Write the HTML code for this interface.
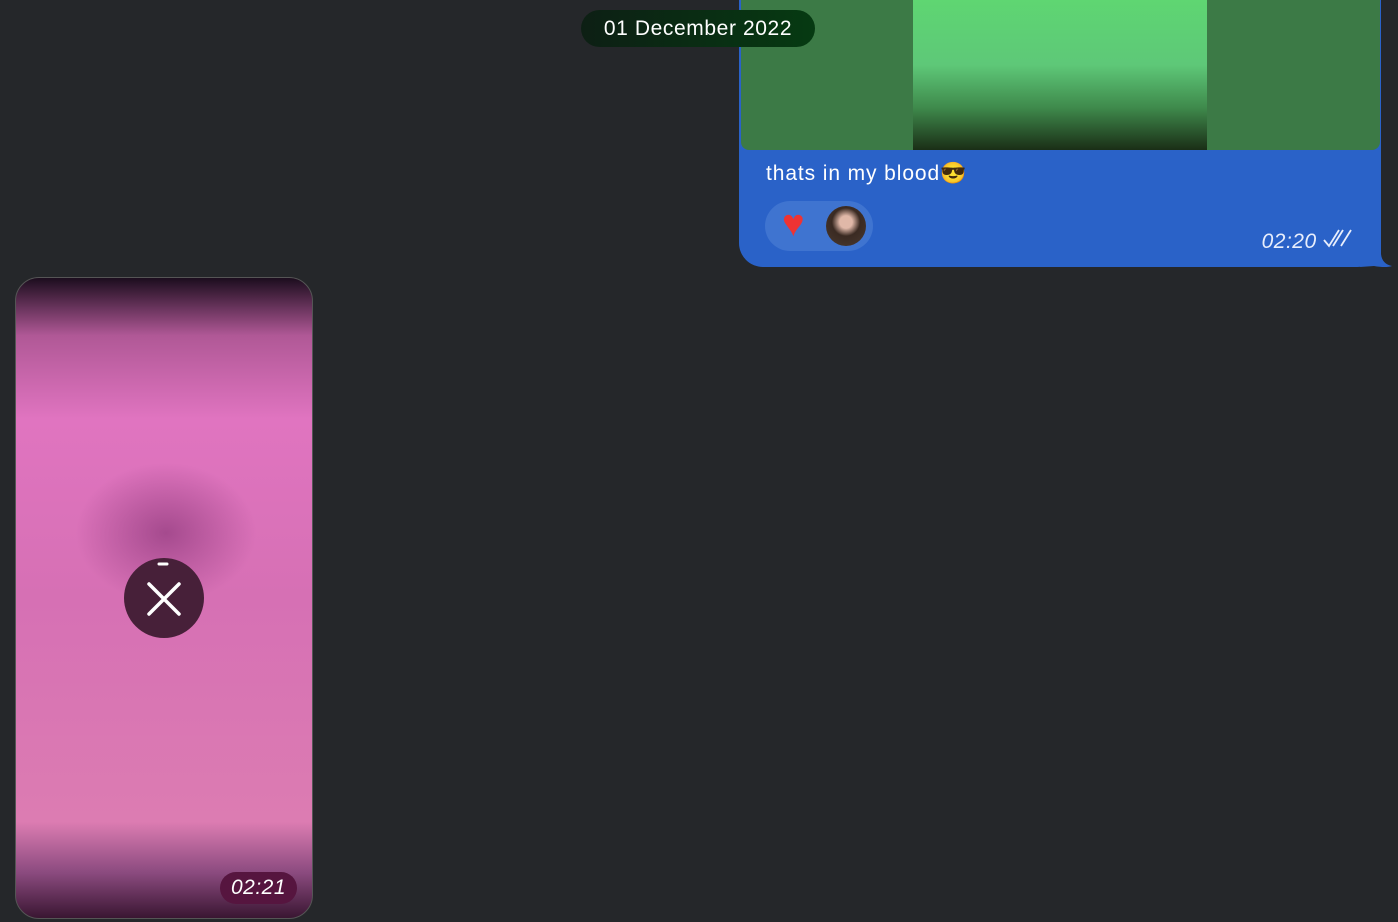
<!DOCTYPE html>
<html><head><style>
body{margin:0;width:1398px;height:922px;background:#25272a;overflow:hidden;position:relative;font-family:"Liberation Sans",sans-serif}
.date{position:absolute;left:581px;top:10px;width:234px;height:37px;border-radius:19px;background:linear-gradient(90deg,#0d1f14,#063a12);color:#fff;font-size:21px;letter-spacing:0.6px;line-height:37px;text-align:center;z-index:2}
.bub{position:absolute;left:739px;top:-20px;width:642px;height:287px;background:#2a62c8;border-radius:0 0 24px 24px}
.img{position:absolute;left:2px;top:0;width:639px;height:170px;background:#3c7a46;border-radius:0 0 8px 8px;overflow:hidden}
.img i{position:absolute;left:172px;top:0;width:294px;height:170px;background:linear-gradient(180deg,#5fda70 0%,#5ec878 50%,#3f8a4c 75%,#1a2e16 100%)}
.txt{position:absolute;left:27px;top:182px;color:#fff;font-size:21px;letter-spacing:0.9px}
.re{position:absolute;left:26px;top:221px;width:108px;height:50px;border-radius:25px;background:#3f74d0}
.av{position:absolute;left:87px;top:226px;width:40px;height:40px;border-radius:50%;background:radial-gradient(circle at 50% 40%,#e0b8a8 20%,#3a2a22 45%,#4a3a30 100%)}
.tm{position:absolute;right:28px;top:248px;color:#e8eefc;font-size:21px;font-style:italic;letter-spacing:0.5px}
.vid{position:absolute;left:15px;top:277px;width:298px;height:642px;box-sizing:border-box;border-radius:24px;border:1px solid #555;overflow:hidden;background:radial-gradient(ellipse 90px 70px at 150px 255px,#a54a8e,rgba(0,0,0,0)),linear-gradient(180deg,#1c0d1e 0%,#b05896 9%,#e074c0 22%,#d670b4 50%,#dc7cb2 85%,#8a4a7e 93%,#3a1632 100%)}
.x{position:absolute;left:124px;top:558px;width:80px;height:80px;border-radius:50%;background:#472039}
.t2{position:absolute;left:220px;top:872px;width:77px;height:32px;border-radius:16px;background:#56153f;color:#fff;font-style:italic;font-size:21px;line-height:32px;text-align:center;letter-spacing:0.5px}
</style></head><body>
<div class="date">01 December 2022</div>
<div class="bub"><div class="img"><i></i></div>
<div class="txt">thats in my blood😎</div>
<div class="re"><span style="position:absolute;left:17px;top:3px;font-size:38px;line-height:40px;color:#e33">♥</span></div>
<div class="av"></div>
<div class="tm">02:20 <svg width="30" height="20" viewBox="0 0 30 20"><path d="M1 12l5 6L16 2M10 18L20 2M18 18L28 2" stroke="#e8eefc" stroke-width="1.8" fill="none"/></svg></div>
</div>
<svg style="position:absolute;left:1360px;top:240px" width="38" height="28"><path d="M21 0V14Q22 24 32 26Q26 28 14 26L0 27Z" fill="#2a62c8"/></svg>
<div class="vid"></div>
<div class="x"><svg width="80" height="80"><path d="M25 26l30 30M55 26L25 56" stroke="#fff" stroke-width="3.5" stroke-linecap="round"/><path d="M35 6h8" stroke="#fff" stroke-width="3" stroke-linecap="round"/></svg></div>
<div class="t2">02:21</div>
</body></html>
